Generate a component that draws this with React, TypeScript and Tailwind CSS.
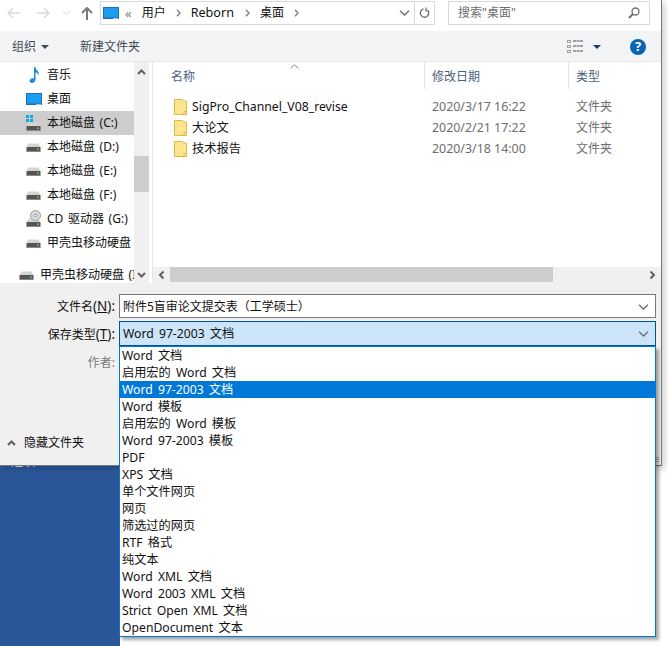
import React from 'react';

const sidebarItems = [
  { label: '音乐', icon: 'music' },
  { label: '桌面', icon: 'desktop' },
  { label: '本地磁盘 (C:)', icon: 'system', selected: true },
  { label: '本地磁盘 (D:)', icon: 'drive' },
  { label: '本地磁盘 (E:)', icon: 'drive' },
  { label: '本地磁盘 (F:)', icon: 'drive' },
  { label: 'CD 驱动器 (G:)', icon: 'cd' },
  { label: '甲壳虫移动硬盘', icon: 'drive' },
];

const files = [
  { name: 'SigPro_Channel_V08_revise', date: '2020/3/17 16:22' },
  { name: '大论文', date: '2020/2/21 17:22' },
  { name: '技术报告', date: '2020/3/18 14:00' },
];

const fileTypes = [
  'Word 文档',
  '启用宏的 Word 文档',
  'Word 97-2003 文档',
  'Word 模板',
  '启用宏的 Word 模板',
  'Word 97-2003 模板',
  'PDF',
  'XPS 文档',
  '单个文件网页',
  '网页',
  '筛选过的网页',
  'RTF 格式',
  '纯文本',
  'Word XML 文档',
  'Word 2003 XML 文档',
  'Strict Open XML 文档',
  'OpenDocument 文本',
];

const DesktopIcon = () => (
  <svg width="16" height="13" viewBox="0 0 16 13" className="shrink-0">
    <rect x="0" y="0" width="16" height="12" fill="#1e6fb8" />
    <rect x="1" y="1" width="14" height="9.5" fill="#1e9cf0" />
    <rect x="10" y="11" width="5" height="1" fill="#9fd0f0" />
  </svg>
);

const DriveIcon = () => (
  <svg width="15" height="9" viewBox="0 0 15 9" className="shrink-0">
    <path d="M2.5 0.5h10L14.5 4.5H0.5z" fill="#d4d4d4" />
    <rect x="0.5" y="4" width="14" height="4.5" fill="#555" />
    <rect x="0.5" y="8" width="14" height="1" fill="#888" />
    <rect x="11" y="5.5" width="2" height="1.5" fill="#4fd04f" />
  </svg>
);

const SidebarIcon = ({ type }: { type: string }) => {
  if (type === 'music') {
    return (
      <svg width="16" height="16" viewBox="0 0 16 16" className="shrink-0">
        <path d="M8 0h1.4c.3 2.4 1.6 3.2 2.6 4.4 1 1.3.8 3 .1 4.1.1-1.6-.8-2.8-2.6-3.3v7.6c0 1.9-1.8 3.2-3.6 3.2-1.3 0-2.4-.8-2.4-2 0-1.600 1.800-2.800 3.400-2.800.4 0 .7 0 1.100.2z" fill="#1e8ad6" />
      </svg>
    );
  }
  if (type === 'desktop') return <DesktopIcon />;
  if (type === 'system') {
    return (
      <div className="relative flex h-[16px] w-[15px] shrink-0 items-end">
        <DriveIcon />
        <div className="absolute left-0 top-0 grid grid-cols-2 gap-px">
          <div className="size-[3px] bg-[#12a5e8]" />
          <div className="size-[3px] bg-[#12a5e8]" />
          <div className="size-[3px] bg-[#12a5e8]" />
          <div className="size-[3px] bg-[#12a5e8]" />
        </div>
      </div>
    );
  }
  if (type === 'cd') {
    return (
      <div className="relative flex h-[16px] w-[15px] shrink-0 items-end">
        <DriveIcon />
        <svg width="11" height="11" viewBox="0 0 11 11" className="absolute right-0 top-[-1px]">
          <circle cx="5.5" cy="5.5" r="5" fill="#dcdcdc" stroke="#9a9a9a" />
          <circle cx="5.5" cy="5.5" r="1.500" fill="#fff" stroke="#8a8a8a" />
        </svg>
      </div>
    );
  }
  return <DriveIcon />;
};

const FolderIcon = () => (
  <svg width="13" height="16" viewBox="0 0 13 16" className="shrink-0">
    <path d="M.5.500h8l1 1.500h3v13.500H.5z" fill="#fde48f" stroke="#e2b93f" />
    <path d="M10 15.500v-3h2.500" fill="none" stroke="#e2b93f" />
  </svg>
);

const Chevron = ({ className = '' }: { className?: string }) => (
  <svg width="11" height="6" viewBox="0 0 11 6" className={className}>
    <path d="M1 .8l4.500 4.200L10 .8" fill="none" stroke="#6d6d6d" strokeWidth="1.300" />
  </svg>
);

const ScrollArrow = ({ className = '' }: { className?: string }) => (
  <svg width="9" height="6" viewBox="0 0 9 6" className={className}>
    <path d="M1 1l3.500 3.500L8 1" fill="none" stroke="#606060" strokeWidth="2" />
  </svg>
);

const Breadcrumb = () => (
  <svg width="5" height="8" viewBox="0 0 5 8" className="shrink-0">
    <path d="M1 .8L4 4 1 7.200" fill="none" stroke="#7a7a7a" strokeWidth="1.300" />
  </svg>
);

const Caret = ({ color = '#3f4a5a' }: { color?: string }) => (
  <svg width="8" height="4" viewBox="0 0 8 4">
    <path d="M0 0h8L4 4z" fill={color} />
  </svg>
);

const NavArrow = ({ color, flip = false }: { color: string; flip?: boolean }) => (
  <svg width="13" height="12" viewBox="0 0 13 12" className={flip ? 'rotate-180' : ''}>
    <path d="M6 1L1.200 6 6 11M1.500 6H13" fill="none" stroke={color} strokeWidth="1.500" />
  </svg>
);

export default function App() {
  return (
    <div className="relative flex h-[646px] w-[668px] flex-col overflow-hidden bg-white text-[12px] leading-[16px] text-[#111] [font-family:'Noto_Sans','Noto_Sans_CJK_SC',sans-serif]">
      <div className="relative z-10 flex h-[466px] w-[662px] shrink-0 flex-col border-b border-r border-[#777] bg-white shadow-[3px_3px_6px_rgba(0,0,0,0.18)]">
        {/* Address bar */}
        <div className="flex h-[31px] shrink-0 items-start pt-px">
          <div className="flex h-[24px] w-[100px] shrink-0 items-center pl-[7px]">
            <NavArrow color="#d9d9d9" />
            <div className="ml-[17px]">
              <NavArrow color="#d9d9d9" flip />
            </div>
            <Chevron className="ml-[11px] scale-75 opacity-30" />
            <svg width="12" height="13" viewBox="0 0 12 13" className="ml-[9px]">
              <path d="M6 1v12M1 6l5-5 5 5" fill="none" stroke="#7a7a7a" strokeWidth="2" />
            </svg>
          </div>
          <div className="flex h-[24px] w-[335px] shrink-0 items-center border border-[#d9d9d9] pl-[2px]">
            <DesktopIcon />
            <span className="ml-[6px] text-[13px] leading-none text-[#7a7a7a]">«</span>
            <span className="ml-[10px]">用户</span>
            <div className="ml-[10px]"><Breadcrumb /></div>
            <span className="ml-[10px] text-[12.6px]">Reborn</span>
            <div className="ml-[11px]"><Breadcrumb /></div>
            <span className="ml-[10px]">桌面</span>
            <div className="ml-[10px]"><Breadcrumb /></div>
            <div className="flex-1" />
            <Chevron className="mr-[4px]" />
            <div className="flex h-full w-[20px] items-center justify-center border-l border-[#d9d9d9]">
              <svg width="11" height="12" viewBox="0 0 11 12">
                <path d="M7.800 2.600A4.200 4.200 0 1 1 3 2.600" fill="none" stroke="#6d6d6d" strokeWidth="1.300" transform="rotate(20 5.500 6.500)" />
                <path d="M7 .5v3.500h3" fill="none" stroke="#6d6d6d" strokeWidth="1.200" />
              </svg>
            </div>
          </div>
          <div className="ml-[13px] flex h-[24px] w-[202px] shrink-0 items-center justify-between border border-[#d9d9d9] pl-[9px] pr-[9px] text-[#6d6d6d]">
            <span>搜索"桌面"</span>
            <svg width="12" height="12" viewBox="0 0 12 12">
              <circle cx="7.500" cy="4.500" r="3.500" fill="none" stroke="#6d6d6d" strokeWidth="1.300" />
              <path d="M5 7l-4 4" stroke="#6d6d6d" strokeWidth="2" />
            </svg>
          </div>
        </div>

        {/* Toolbar */}
        <div className="flex h-[31px] shrink-0 items-center border-b border-[#e6e8eb] bg-[#f3f4f6] pl-[12px] pt-px text-[#404a57]">
          <span>组织</span>
          <div className="ml-[5px]"><Caret /></div>
          <span className="ml-[31px]">新建文件夹</span>
          <div className="flex-1" />
          <div className="grid grid-cols-[4px_10px] gap-x-[2px] gap-y-[2px]">
            <div className="h-[3px] border border-[#a0a0a0]" />
            <div className="h-[2px] border-t border-b border-dashed border-[#a0a0a0]" />
            <div className="h-[3px] border border-[#a0a0a0]" />
            <div className="h-[2px] border-t border-b border-dashed border-[#a0a0a0]" />
            <div className="h-[3px] border border-[#a0a0a0]" />
            <div className="h-[2px] border-t border-b border-dashed border-[#a0a0a0]" />
          </div>
          <div className="ml-[10px]"><Caret color="#1f3a5f" /></div>
          <div className="ml-[29px] mr-[15px] flex size-[16px] items-center justify-center rounded-full bg-[#0a64b4] text-[13px] font-bold leading-none text-white">?</div>
        </div>

        {/* Browser */}
        <div className="flex h-[221px] shrink-0">
          <div className="flex w-[153px] shrink-0 border-r border-[#e6e6e6]">
            <div className="flex w-[134px] shrink-0 flex-col overflow-hidden pt-[1px] [word-spacing:1.5px]">
              {sidebarItems.map((item) => (
                <div
                  key={item.label}
                  className={`flex h-[24px] shrink-0 items-center gap-[6px] whitespace-nowrap pl-[26px] ${item.selected ? 'bg-[#cdcdcd]' : ''}`}
                >
                  <div className="flex w-[15px] shrink-0 justify-center">
                    <SidebarIcon type={item.icon} />
                  </div>
                  <span>{item.label}</span>
                </div>
              ))}
              <div className="mt-[8px] flex h-[24px] shrink-0 items-center gap-[6px] whitespace-nowrap pl-[19px]">
                <DriveIcon />
                <span>甲壳虫移动硬盘 (I:)</span>
              </div>
            </div>
            <div className="flex w-[15px] shrink-0 flex-col items-center bg-[#f0f0f0] pt-[7px]">
              <ScrollArrow className="rotate-180" />
              <div className="mt-[81px] h-[36px] w-full bg-[#cdcdcd]" />
              <div className="flex-1" />
              <ScrollArrow className="mb-[5px]" />
            </div>
          </div>

          <div className="flex min-w-0 flex-1 flex-col">
            <div className="relative flex h-[27px] shrink-0 text-[#4c607a]">
              <div className="w-[271px] shrink-0 pl-[18px] pt-[7px]">名称</div>
              <svg width="9" height="5" viewBox="0 0 9 5" className="absolute left-[137px] top-[2px]">
                <path d="M.5 4.500L4.500.8l4 3.700" fill="none" stroke="#8a8a8a" />
              </svg>
              <div className="w-[144px] shrink-0 border-l border-[#e5e5e5] pl-[7px] pt-[7px]">修改日期</div>
              <div className="flex-1 border-l border-[#e5e5e5] pl-[7px] pt-[7px]">类型</div>
            </div>
            <div className="flex flex-1 flex-col pt-[7px]">
              {files.map((file) => (
                <div key={file.name} className="flex h-[21px] shrink-0 items-center">
                  <div className="flex w-[272px] shrink-0 items-center gap-[5px] pl-[21px] text-[12.25px]">
                    <FolderIcon />
                    <span>{file.name}</span>
                  </div>
                  <div className="w-[144px] shrink-0 pl-[7px] text-[12.4px] text-[#6d6d6d]">{file.date}</div>
                  <div className="pl-[7px] text-[#6d6d6d]">文件夹</div>
                </div>
              ))}
            </div>
            <div className="flex h-[16px] shrink-0 bg-[#f0f0f0]">
              <div className="flex w-[17px] shrink-0 items-center justify-center">
                <ScrollArrow className="rotate-90" />
              </div>
              <div className="h-[15px] w-[383px] shrink-0 bg-[#cdcdcd]" />
              <div className="flex-1" />
              <div className="flex w-[17px] shrink-0 items-center justify-center">
                <ScrollArrow className="-rotate-90" />
              </div>
            </div>
          </div>
        </div>

        {/* Save form */}
        <div className="relative flex min-h-0 flex-1 flex-col bg-[#f0f0f0] pl-[119px] pr-[5px] pt-[11px]">
          <div className="flex h-[24px] shrink-0 items-center">
            <label className="-ml-[119px] w-[116px] shrink-0 pr-px pt-px text-right">文件名<span className="text-[13.5px]">(<u>N</u>):</span></label>
            <div className="ml-[3px] flex h-full flex-1 items-center justify-between border border-[#7a7a7a] bg-white pl-[3px] pr-[6px] pt-px">
              <span>附件5盲审论文提交表（工学硕士）</span>
              <Chevron />
            </div>
          </div>
          <div className="relative mt-[3px] flex h-[25px] shrink-0 items-center">
            <label className="-ml-[119px] w-[116px] shrink-0 pr-px pt-px text-right">保存类型<span className="text-[13.5px]">(<u>T</u>):</span></label>
            <div className="ml-[3px] flex h-full flex-1 items-center justify-between border border-[#005499] bg-[#cce4f7] pl-[3px] pr-[6px] pt-px text-[12.2px] [word-spacing:2px]">
              <span>Word 97-2003 文档</span>
              <Chevron />
            </div>
            <div className="absolute left-0 right-0 top-full z-20 flex flex-col border border-[#0078d7] bg-white text-[12.2px] shadow-[3px_3px_3px_rgba(0,0,0,0.35)] [word-spacing:2px]">
              {fileTypes.map((type, i) => (
                <div
                  key={type}
                  className={`h-[17px] whitespace-nowrap pl-[2px] leading-[17px] ${i === 2 ? 'bg-[#0078d7] text-white' : ''}`}
                >
                  {type}
                </div>
              ))}
            </div>
          </div>
          <div className="-ml-[119px] mt-[9px] w-[116px] pr-px text-right text-[#7a7a7a]">作者:</div>
          <div className="-ml-[119px] mt-[64px] flex items-center gap-[8px] pl-[7px]">
            <ScrollArrow className="rotate-180" />
            <span>隐藏文件夹</span>
          </div>
          <div className="absolute bottom-[3px] right-[2px] flex flex-col gap-[1px]">
            <div className="h-[1px] w-[3px] bg-[#a8a8a8]" />
            <div className="h-[1px] w-[3px] bg-[#a8a8a8]" />
            <div className="h-[1px] w-[3px] bg-[#a8a8a8]" />
          </div>
        </div>
      </div>

      <div className="flex min-h-0 flex-1">
        <div className="h-full w-[120px] overflow-hidden bg-[#2b579a] pl-[11px] text-white">
          <div className="-mt-[12px]">选项</div>
        </div>
      </div>
    </div>
  );
}
